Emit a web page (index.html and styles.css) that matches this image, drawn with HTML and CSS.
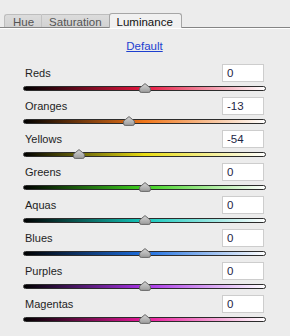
FILE: index.html
```html
<!DOCTYPE html>
<html>
<head>
<meta charset="utf-8">
<link rel="stylesheet" href="styles.css">
</head>
<body>
<div class="panel">
  <div class="tabs">
    <div class="tab tab-first">Hue</div>
    <div class="tab">Saturation</div>
    <div class="tab tab-active">Luminance</div>
  </div>
  <div class="default-row"><a class="default-link" href="#">Default</a></div>
  <div class="rows">
    <div class="row">
      <span class="label">Reds</span><span class="value">0</span>
      <div class="slider"><div class="track reds"></div><svg class="thumb" style="left:50%" width="12" height="10" viewBox="0 0 12 10"><defs><linearGradient id="tg" x1="0" y1="0" x2="0" y2="1"><stop offset="0" stop-color="#d4d4d4"/><stop offset="1" stop-color="#9c9c9c"/></linearGradient></defs><path d="M6 0.6 L11.4 5 V7.8 Q11.4 9.4 9.8 9.4 H2.2 Q0.6 9.4 0.6 7.8 V5 Z" fill="url(#tg)" stroke="#686868" stroke-width="1"/></svg></div>
    </div>
    <div class="row">
      <span class="label">Oranges</span><span class="value">-13</span>
      <div class="slider"><div class="track oranges"></div><svg class="thumb" style="left:43.5%" width="12" height="10" viewBox="0 0 12 10"><path d="M6 0.6 L11.4 5 V7.8 Q11.4 9.4 9.8 9.4 H2.2 Q0.6 9.4 0.6 7.8 V5 Z" fill="url(#tg)" stroke="#686868" stroke-width="1"/></svg></div>
    </div>
    <div class="row">
      <span class="label">Yellows</span><span class="value">-54</span>
      <div class="slider"><div class="track yellows"></div><svg class="thumb" style="left:23%" width="12" height="10" viewBox="0 0 12 10"><path d="M6 0.6 L11.4 5 V7.8 Q11.4 9.4 9.8 9.4 H2.2 Q0.6 9.4 0.6 7.8 V5 Z" fill="url(#tg)" stroke="#686868" stroke-width="1"/></svg></div>
    </div>
    <div class="row">
      <span class="label">Greens</span><span class="value">0</span>
      <div class="slider"><div class="track greens"></div><svg class="thumb" style="left:50%" width="12" height="10" viewBox="0 0 12 10"><path d="M6 0.6 L11.4 5 V7.8 Q11.4 9.4 9.8 9.4 H2.2 Q0.6 9.4 0.6 7.8 V5 Z" fill="url(#tg)" stroke="#686868" stroke-width="1"/></svg></div>
    </div>
    <div class="row">
      <span class="label">Aquas</span><span class="value">0</span>
      <div class="slider"><div class="track aquas"></div><svg class="thumb" style="left:50%" width="12" height="10" viewBox="0 0 12 10"><path d="M6 0.6 L11.4 5 V7.8 Q11.4 9.4 9.8 9.4 H2.2 Q0.6 9.4 0.6 7.8 V5 Z" fill="url(#tg)" stroke="#686868" stroke-width="1"/></svg></div>
    </div>
    <div class="row">
      <span class="label">Blues</span><span class="value">0</span>
      <div class="slider"><div class="track blues"></div><svg class="thumb" style="left:50%" width="12" height="10" viewBox="0 0 12 10"><path d="M6 0.6 L11.4 5 V7.8 Q11.4 9.4 9.8 9.4 H2.2 Q0.6 9.4 0.6 7.8 V5 Z" fill="url(#tg)" stroke="#686868" stroke-width="1"/></svg></div>
    </div>
    <div class="row">
      <span class="label">Purples</span><span class="value">0</span>
      <div class="slider"><div class="track purples"></div><svg class="thumb" style="left:50%" width="12" height="10" viewBox="0 0 12 10"><path d="M6 0.6 L11.4 5 V7.8 Q11.4 9.4 9.8 9.4 H2.2 Q0.6 9.4 0.6 7.8 V5 Z" fill="url(#tg)" stroke="#686868" stroke-width="1"/></svg></div>
    </div>
    <div class="row">
      <span class="label">Magentas</span><span class="value">0</span>
      <div class="slider"><div class="track magentas"></div><svg class="thumb" style="left:50%" width="12" height="10" viewBox="0 0 12 10"><path d="M6 0.6 L11.4 5 V7.8 Q11.4 9.4 9.8 9.4 H2.2 Q0.6 9.4 0.6 7.8 V5 Z" fill="url(#tg)" stroke="#686868" stroke-width="1"/></svg></div>
    </div>
  </div>
</div>
</body>
</html>
```
FILE: styles.css
```css
html, body {
  margin: 0;
  padding: 0;
  background: #ececec;
}
body {
  width: 290px;
  height: 336px;
  overflow: hidden;
  font-family: "Liberation Sans", Arial, sans-serif;
  color: #1e1e1e;
}
.panel {
  display: flex;
  flex-direction: column;
}
.tabs {
  display: flex;
  margin-top: 14px;
  padding-left: 4px;
  border-bottom: 1px solid #858585;
  box-shadow: 0 1px 0 #ffffff;
  height: 13px;
}
.tab {
  box-sizing: border-box;
  height: 13px;
  padding: 1px 7px 0 7px;
  line-height: 12px;
  font-size: 11.5px;
  color: #555;
  background: linear-gradient(#dcdcdc, #d2d2d2);
  border-top: 1px solid #bdbdbd;
  border-right: 1px solid #c2c2c2;
  white-space: nowrap;
}
.tab-first {
  padding-left: 8px;
  border-left: 1px solid #bdbdbd;
  border-top-left-radius: 3px;
}
.tab-active {
  height: 15px;
  margin-top: -1px;
  margin-bottom: -1px;
  padding-top: 2px;
  padding-left: 7px;
  padding-right: 8px;
  color: #111;
  background: #f1f1f1;
  border-top: 1px solid #a6a6a6;
  border-left: 1px solid #a6a6a6;
  border-right: 1px solid #a6a6a6;
  border-radius: 3px 3px 0 0;
  margin-left: -1px;
}
.default-row {
  margin-top: 11px;
  display: flex;
  justify-content: center;
  line-height: 14px;
  height: 14px;
}
.default-link {
  font-size: 11.5px;
  color: #1d3fcf;
  text-decoration: underline;
  padding-right: 1px;
}
.rows {
  margin-top: 11px;
  padding: 0 24px 0 23px;
  display: flex;
  flex-direction: column;
}
.row {
  display: grid;
  grid-template-columns: 1fr 42px;
  grid-template-rows: 18px 15px;
  column-gap: 0;
}
.label {
  padding-left: 2px;
  font-size: 11px;
  line-height: 18px;
  color: #1e1e1e;
}
.value {
  box-sizing: border-box;
  width: 42px;
  height: 18px;
  margin-left: -2px;
  background: #fff;
  border: 1px solid #cdcdcd;
  padding-left: 4px;
  font-size: 11.5px;
  line-height: 16px;
  color: #1d2544;
}
.slider {
  grid-column: 1 / 3;
  position: relative;
}
.track {
  box-sizing: border-box;
  margin-top: 4px;
  height: 5px;
  border: 1px solid #2c2c2c;
  border-radius: 3px;
}
.thumb {
  position: absolute;
  top: 1px;
  transform: translateX(-50%);
  display: block;
}
.reds { background: linear-gradient(90deg, #000 0%, #e5173f 50%, #fff 100%); }
.oranges { background: linear-gradient(90deg, #000 0%, #f0761a 50%, #fff 100%); }
.yellows { background: linear-gradient(90deg, #000 0%, #e8dc14 50%, #fff 100%); }
.greens { background: linear-gradient(90deg, #000 0%, #3ed21e 50%, #fff 100%); }
.aquas { background: linear-gradient(90deg, #000 0%, #14c8bc 50%, #fff 100%); }
.blues { background: linear-gradient(90deg, #000 0%, #1c6ee0 50%, #fff 100%); }
.purples { background: linear-gradient(90deg, #000 0%, #a834e6 50%, #fff 100%); }
.magentas { background: linear-gradient(90deg, #000 0%, #e8189a 50%, #fff 100%); }
```
